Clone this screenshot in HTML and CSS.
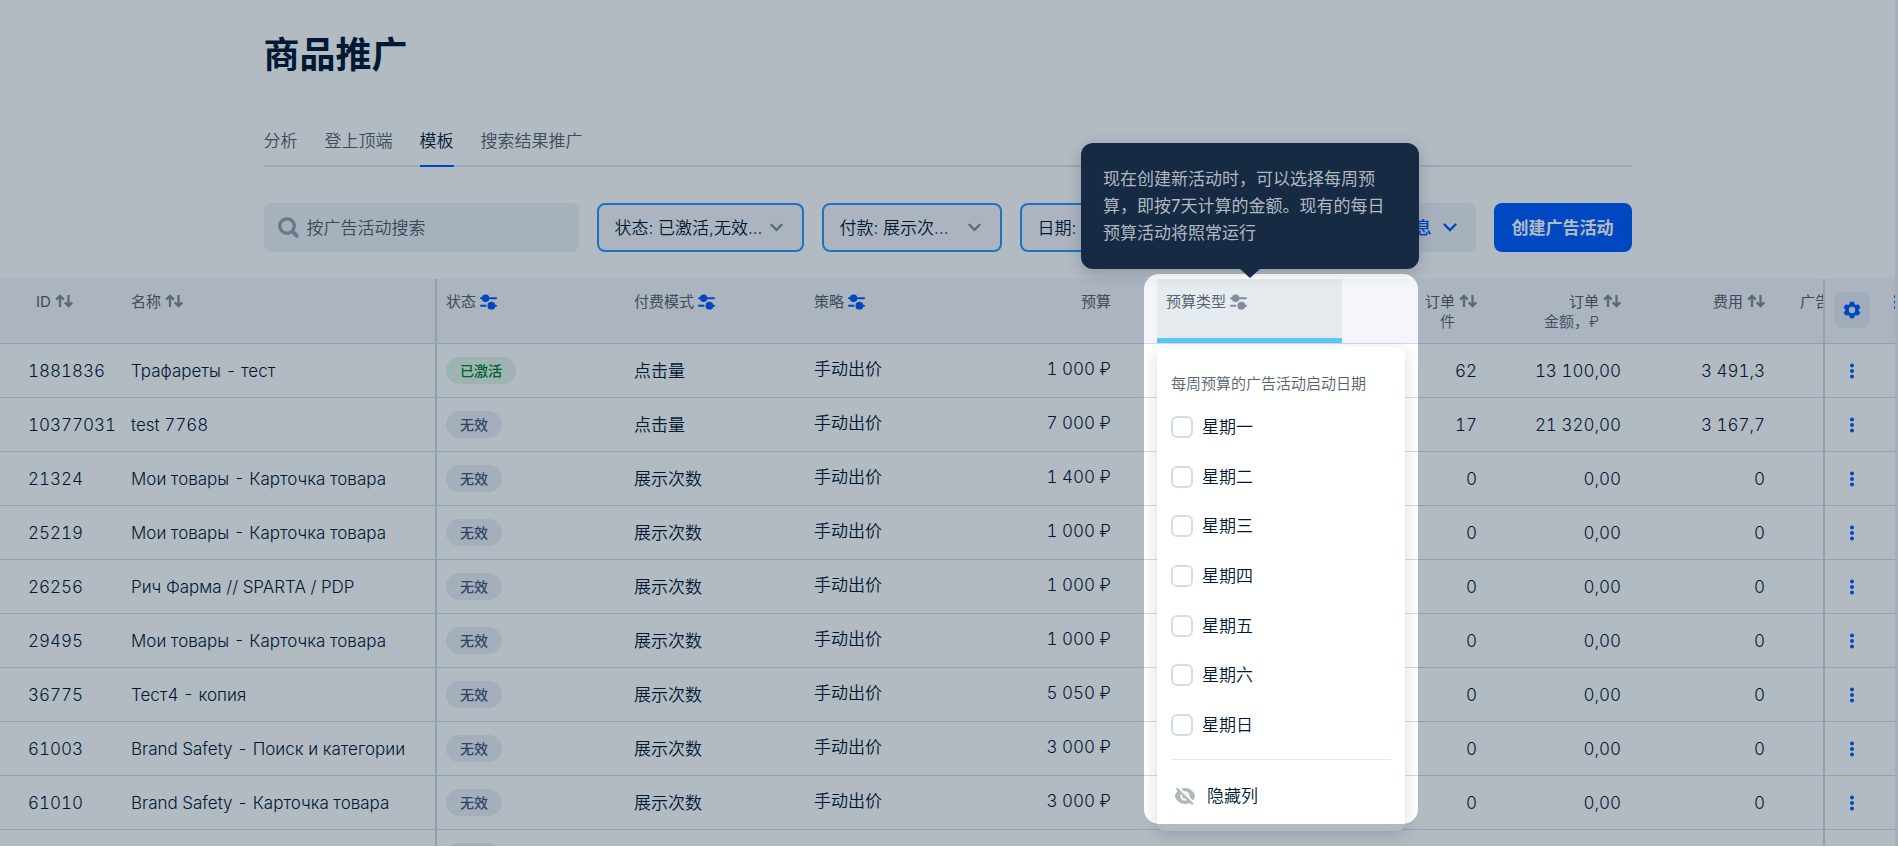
FILE: index.html
```html
<!DOCTYPE html>
<html lang="zh-CN">
<head>
<meta charset="utf-8">
<title>商品推广</title>
<link rel="stylesheet" href="styles.css">
</head>
<body>
<svg class="sprite" aria-hidden="true">
  <symbol id="sort" viewBox="0 0 18 14"><path d="M5 13V2M1.200 5.600 5 1.800l3.800 3.800M13.500 1v11M9.800 8.400l3.700 3.800 3.700-3.800" fill="none" stroke="currentColor" stroke-width="2.300"/></symbol>
  <symbol id="tune" viewBox="0 0 17 16"><path d="M1 4.300h15M1 11.700h4.500M9 11.700h7" stroke="currentColor" stroke-width="2" stroke-linecap="round"/><circle cx="5.600" cy="4.300" r="3.700" fill="currentColor"/><circle cx="11.400" cy="11.700" r="3.900" fill="currentColor"/></symbol>
  <symbol id="chev" viewBox="0 0 14 9"><path d="M1.500 1.500 7 7l5.500-5.500" fill="none" stroke="currentColor" stroke-width="2.400" stroke-linecap="round"/></symbol>
  <symbol id="dots" viewBox="0 0 4 16"><g fill="currentColor"><circle cx="2" cy="2.500" r="2"/><circle cx="2" cy="8" r="2"/><circle cx="2" cy="13.500" r="2"/></g></symbol>
</svg>
<div class="app">
  <main class="page">
    <div class="container">
      <h1 class="title">商品推广</h1>
      <nav class="tabs">
        <a class="tab" href="#a">分析</a><a class="tab" href="#b">登上顶端</a><a class="tab tab-active" href="#c">模板</a><a class="tab" href="#d">搜索结果推广</a>
      </nav>
      <div class="toolbar">
        <label class="search">
          <svg width="21" height="21" viewBox="0 0 21 21" aria-hidden="true"><circle cx="9" cy="9" r="7.300" fill="none" stroke="currentColor" stroke-width="3.400"/><path d="m15 15 3.800 3.800" stroke="currentColor" stroke-width="4" stroke-linecap="round"/></svg>
          <input type="text" placeholder="按广告活动搜索" aria-label="按广告活动搜索">
        </label>
        <button class="filter filter-wide" type="button"><span>状态: 已激活,无效...</span><svg width="14" height="9"><use href="#chev"/></svg></button>
        <button class="filter" type="button"><span>付款: 展示次...</span><svg width="14" height="9"><use href="#chev"/></svg></button>
        <button class="filter" type="button"><span>日期:</span><svg width="14" height="9"><use href="#chev"/></svg></button>
        <button class="info" type="button"><span>信息</span><svg width="14" height="9"><use href="#chev"/></svg></button>
        <button class="create" type="button">创建广告活动</button>
      </div>
    </div>
    <table class="grid">
      <colgroup><col class="w-id"><col class="w-name"><col class="w-status"><col class="w-mode"><col class="w-mode"><col class="w-budget"><col class="w-type"><col class="w-num"><col class="w-num"><col class="w-num"><col><col class="w-act"></colgroup>
      <thead>
        <tr>
          <th class="id"><div class="head"><span>ID</span><svg width="18" height="14"><use href="#sort"/></svg></div></th>
          <th><div class="head"><span>名称</span><svg width="18" height="14"><use href="#sort"/></svg></div></th>
          <th class="split"><div class="head on"><span>状态</span><svg width="17" height="16"><use href="#tune"/></svg></div></th>
          <th><div class="head on"><span>付费模式</span><svg width="17" height="16"><use href="#tune"/></svg></div></th>
          <th><div class="head on"><span>策略</span><svg width="17" height="16"><use href="#tune"/></svg></div></th>
          <th class="budget"><div class="head end"><span>预算</span></div></th>
          <th class="open"><div class="head"><span>预算类型</span><svg width="17" height="16"><use href="#tune"/></svg></div></th>
          <th><div class="head end"><span>订单<small>件</small></span><svg width="18" height="14"><use href="#sort"/></svg></div></th>
          <th><div class="head end"><span>订单<small>金额，₽</small></span><svg width="18" height="14"><use href="#sort"/></svg></div></th>
          <th><div class="head end"><span>费用</span><svg width="18" height="14"><use href="#sort"/></svg></div></th>
          <th class="cut"><div class="head"><span>广告</span></div></th>
          <th class="split act"><button class="gear" type="button" aria-label="设置"><svg width="18" height="18" viewBox="0 0 18 18"><path fill="currentColor" fill-rule="evenodd" d="M7 .8h4l.6 2.500 1.300.7 2.500-.7 2 3.400-1.800 1.900v1l1.800 1.900-2 3.300-2.500-.7-1.300.8-.6 2.400H7l-.6-2.400-1.300-.8-2.500.7-2-3.300 1.800-1.900v-1L.6 6.700l2-3.400 2.500.7 1.300-.7zM9 5.800a3.200 3.200 0 1 0 0 6.400 3.200 3.200 0 0 0 0-6.400"/></svg></button><svg class="edge" width="4" height="16"><use href="#dots"/></svg></th>
        </tr>
      </thead>
      <tbody>
        <tr><td class="id">1881836</td><td class="name">Трафареты - тест</td><td class="split"><span class="badge badge-on">已激活</span></td><td>点击量</td><td class="up">手动出价</td><td class="budget up">1 000 ₽</td><td></td><td class="num">62</td><td class="num">13 100,00</td><td class="num">3 491,3</td><td></td><td class="split act"><button class="more" type="button" aria-label="更多"><svg width="4" height="16"><use href="#dots"/></svg></button></td></tr>
        <tr><td class="id">10377031</td><td class="name">test 7768</td><td class="split"><span class="badge">无效</span></td><td>点击量</td><td class="up">手动出价</td><td class="budget up">7 000 ₽</td><td></td><td class="num">17</td><td class="num">21 320,00</td><td class="num">3 167,7</td><td></td><td class="split act"><button class="more" type="button" aria-label="更多"><svg width="4" height="16"><use href="#dots"/></svg></button></td></tr>
        <tr><td class="id">21324</td><td class="name">Мои товары - Карточка товара</td><td class="split"><span class="badge">无效</span></td><td>展示次数</td><td class="up">手动出价</td><td class="budget up">1 400 ₽</td><td></td><td class="num">0</td><td class="num">0,00</td><td class="num">0</td><td></td><td class="split act"><button class="more" type="button" aria-label="更多"><svg width="4" height="16"><use href="#dots"/></svg></button></td></tr>
        <tr><td class="id">25219</td><td class="name">Мои товары - Карточка товара</td><td class="split"><span class="badge">无效</span></td><td>展示次数</td><td class="up">手动出价</td><td class="budget up">1 000 ₽</td><td></td><td class="num">0</td><td class="num">0,00</td><td class="num">0</td><td></td><td class="split act"><button class="more" type="button" aria-label="更多"><svg width="4" height="16"><use href="#dots"/></svg></button></td></tr>
        <tr><td class="id">26256</td><td class="name">Рич Фарма // SPARTA / PDP</td><td class="split"><span class="badge">无效</span></td><td>展示次数</td><td class="up">手动出价</td><td class="budget up">1 000 ₽</td><td></td><td class="num">0</td><td class="num">0,00</td><td class="num">0</td><td></td><td class="split act"><button class="more" type="button" aria-label="更多"><svg width="4" height="16"><use href="#dots"/></svg></button></td></tr>
        <tr><td class="id">29495</td><td class="name">Мои товары - Карточка товара</td><td class="split"><span class="badge">无效</span></td><td>展示次数</td><td class="up">手动出价</td><td class="budget up">1 000 ₽</td><td></td><td class="num">0</td><td class="num">0,00</td><td class="num">0</td><td></td><td class="split act"><button class="more" type="button" aria-label="更多"><svg width="4" height="16"><use href="#dots"/></svg></button></td></tr>
        <tr><td class="id">36775</td><td class="name">Тест4 - копия</td><td class="split"><span class="badge">无效</span></td><td>展示次数</td><td class="up">手动出价</td><td class="budget up">5 050 ₽</td><td></td><td class="num">0</td><td class="num">0,00</td><td class="num">0</td><td></td><td class="split act"><button class="more" type="button" aria-label="更多"><svg width="4" height="16"><use href="#dots"/></svg></button></td></tr>
        <tr><td class="id">61003</td><td class="name">Brand Safety - Поиск и категории</td><td class="split"><span class="badge">无效</span></td><td>展示次数</td><td class="up">手动出价</td><td class="budget up">3 000 ₽</td><td></td><td class="num">0</td><td class="num">0,00</td><td class="num">0</td><td></td><td class="split act"><button class="more" type="button" aria-label="更多"><svg width="4" height="16"><use href="#dots"/></svg></button></td></tr>
        <tr><td class="id">61010</td><td class="name">Brand Safety - Карточка товара</td><td class="split"><span class="badge">无效</span></td><td>展示次数</td><td class="up">手动出价</td><td class="budget up">3 000 ₽</td><td></td><td class="num">0</td><td class="num">0,00</td><td class="num">0</td><td></td><td class="split act"><button class="more" type="button" aria-label="更多"><svg width="4" height="16"><use href="#dots"/></svg></button></td></tr>
        <tr><td></td><td></td><td class="split"><span class="badge">无效</span></td><td></td><td class="up">手动出价</td><td></td><td></td><td></td><td></td><td></td><td></td><td class="split act"></td></tr>
      </tbody>
    </table>
  </main>

  <section class="menu">
    <h2 class="menu-title">每周预算的广告活动启动日期</h2>
    <div class="days">
      <label class="day"><input type="checkbox">星期一</label>
      <label class="day"><input type="checkbox">星期二</label>
      <label class="day"><input type="checkbox">星期三</label>
      <label class="day"><input type="checkbox">星期四</label>
      <label class="day"><input type="checkbox">星期五</label>
      <label class="day"><input type="checkbox">星期六</label>
      <label class="day"><input type="checkbox">星期日</label>
    </div>
    <button class="hide" type="button"><svg width="22" height="18" viewBox="0 0 22 18" aria-hidden="true"><path fill="#b0b8bf" d="M11 1C6 1 2.200 4.300.8 9c1.400 4.700 5.200 8 10.200 8s8.800-3.300 10.200-8C19.800 4.300 16 1 11 1"/><circle cx="11" cy="9" r="3.700" fill="none" stroke="#fff" stroke-width="2"/><path d="M3.500-.5 21 17" stroke="#fff" stroke-width="2"/><path d="M2.500 1.200 18.800 17.300" stroke="#b0b8bf" stroke-width="2.200"/></svg>隐藏列</button>
  </section>
  <div class="spotlight"></div>
  <div class="tooltip" role="tooltip">现在创建新活动时，可以选择每周预算，即按7天计算的金额。现有的每日预算活动将照常运行</div>
</div>
</body>
</html>
```
FILE: styles.css
```css
* { box-sizing: border-box; }
body {
  margin: 0;
  background: #fff;
  color: #001a34;
  font: 350 17px/24px Inter, "Noto Sans CJK SC", sans-serif;
}
button, input { font: inherit; color: inherit; margin: 0; }
button { border: 0; padding: 0; background: none; cursor: pointer; }
svg { display: block; flex: none; }
.sprite { position: absolute; width: 0; height: 0; }

.app {
  position: relative;
  height: calc(100vh - 1px);
  overflow: hidden;
}
.page { min-height: 100%; border-right: 3px solid #eaeff4; }
.container { max-width: 1368px; margin: 0 auto; padding-top: 30px; }
.title { margin: 0; font-size: 36px; line-height: 50px; font-weight: 700; }

.tabs {
  display: flex;
  gap: 27px;
  margin-top: 49px;
  border-bottom: 2px solid #e0e8ef;
}
.tab {
  padding-bottom: 12px;
  margin-bottom: -2px;
  border-bottom: 2px solid transparent;
  color: #56646f;
  text-decoration: none;
}
.tab-active { color: #001a34; border-color: #005bff; }

.toolbar { display: flex; gap: 18px; height: 49px; margin: 36px 0 27px; }
.search {
  display: flex;
  align-items: center;
  gap: 8px;
  width: 315px;
  padding-left: 14px;
  border-radius: 8px;
  background: #eef2f6;
  color: #99a3ae;
}
.search input { flex: 1; min-width: 0; border: 0; padding: 0; outline: 0; background: none; }
.search input::placeholder { color: #4f5d6b; opacity: 1; }
.filter {
  display: flex;
  align-items: center;
  justify-content: space-between;
  width: 180px;
  padding: 0 19px 0 16px;
  border: 2px solid #2a99ff;
  border-radius: 8px;
  background: #f5f6fb;
  white-space: nowrap;
}
.filter-wide { width: 207px; }
.filter svg { width: 13px; color: #808d9a; }
.info {
  display: flex;
  align-items: center;
  gap: 11px;
  margin-left: auto;
  padding: 0 19px;
  border-radius: 8px;
  background: #eef2f6;
  color: #005bff;
  font-weight: 500;
}
.create {
  padding: 0 18px;
  border-radius: 8px;
  background: #005bff;
  color: #fff;
  font-weight: 700;
}

.grid { width: 100%; table-layout: fixed; border-spacing: 0; font-variant-numeric: tabular-nums; }
.w-id { width: 122px; }
.w-name { width: 313px; }
.w-status { width: 190px; }
.w-mode { width: 180px; }
.w-budget { width: 172px; }
.w-type { width: 185px; }
.w-num { width: 144px; }
.w-act { width: 72px; }
th, td { padding: 0 9px; border-bottom: 1px solid #d0dce6; text-align: left; white-space: nowrap; }
th {
  height: 65px;
  padding-top: 13px;
  vertical-align: top;
  background: #f5f6fb;
  color: #56646f;
  font-size: 15px;
  line-height: 20px;
  font-weight: 400;
}
td { height: 54px; }
td.id, .name, .num, td.budget { font-weight: 300; }
th.id { padding-left: 36px; }
td.id { padding-left: 28px; padding-right: 0; }
.split { border-left: 2px solid #d0dce6; }
.budget { padding-right: 46px; text-align: right; }
.num { text-align: right; }
.up { padding-bottom: 4px; }
.cut { overflow: hidden; padding-left: 26px; padding-right: 0; }
.head { display: flex; gap: 4px; }
.head svg { margin-top: 2px; color: #808d9a; }
.on svg { color: #005bff; }
.end { justify-content: flex-end; text-align: right; }
small { display: block; font-size: 15px; font-weight: 350; }
.open { background: #e6ebef; box-shadow: inset 0 -5px #5bc8fd; }
.act { position: relative; padding-right: 24px; overflow: hidden; }
.gear {
  display: grid;
  place-items: center;
  width: 36px;
  height: 36px;
  border-radius: 8px;
  background: #e5ebf3;
  color: #005bff;
}
.more { display: grid; place-items: center; width: 36px; height: 36px; color: #005bff; }
.edge { position: absolute; top: 15px; right: -3px; color: #005bff; }

.badge {
  display: inline-block;
  padding: 0 14px;
  border-radius: 14px;
  background: #ecf0f6;
  color: #45587a;
  font-size: 14px;
  line-height: 27px;
  font-weight: 500;
}
.badge-on { background: #e2f6ea; color: #008331; }

.menu {
  position: absolute;
  top: 347px;
  left: 1157px;
  display: flex;
  flex-direction: column;
  width: 248px;
  height: 484px;
  padding: 25px 14px 23px;
  border-radius: 8px;
  background: #fff;
  box-shadow: 0 4px 16px rgba(0, 26, 52, .16);
}
.menu-title { margin: 0; color: #56646f; font-size: 15px; line-height: 24px; font-weight: 350; }
.days {
  flex: 1;
  display: flex;
  flex-direction: column;
  justify-content: space-between;
  padding: 19px 0 22px;
  border-bottom: 1px solid #e3e9ee;
}
.day { display: flex; align-items: center; gap: 9px; }
.day input {
  appearance: none;
  width: 22px;
  height: 22px;
  border: 2px solid #d3dde8;
  border-radius: 6px;
  background: #fff;
}
.hide { display: flex; align-items: center; gap: 11px; padding: 24px 3px 0; }

.spotlight {
  position: absolute;
  top: 274px;
  left: 1144px;
  width: 274px;
  height: 550px;
  border-radius: 15px;
  box-shadow: 0 0 0 3000px rgba(0, 26, 52, .3);
  pointer-events: none;
}
.tooltip {
  position: absolute;
  top: 143px;
  left: 1081px;
  width: 338px;
  padding: 23px 22px 22px;
  border-radius: 12px;
  background: #172a43;
  color: #b0b8c1;
  font-weight: 400;
  line-height: 27px;
  box-shadow: 0 4px 16px rgba(0, 26, 52, .2);
}
.tooltip::after {
  content: "";
  position: absolute;
  top: 100%;
  left: 50%;
  margin-left: -10px;
  border: 10px solid transparent;
  border-top: 9px solid #172a43;
  border-bottom: 0;
}
```
